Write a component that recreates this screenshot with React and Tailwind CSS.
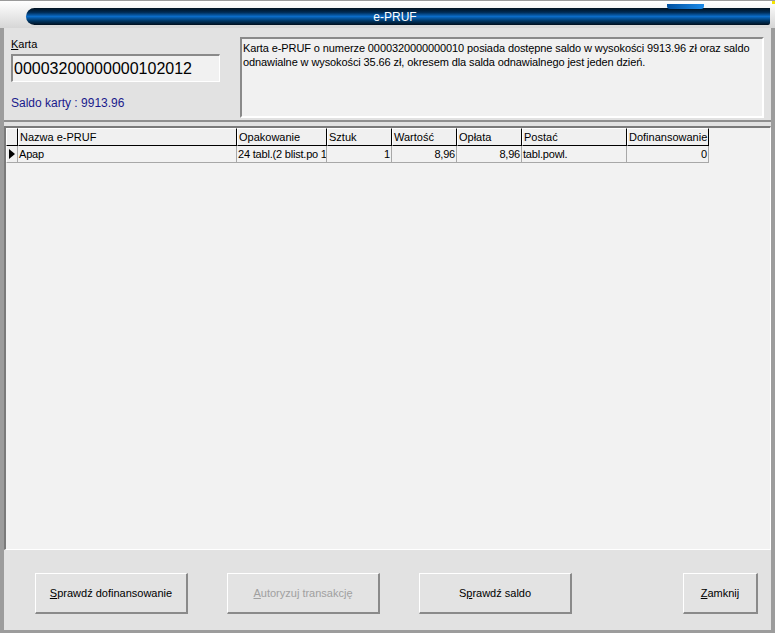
import React from "react";

const columns = [
    { label: "", width: "w-[12px]" },
    { label: "Nazwa e-PRUF", width: "w-[219px]" },
    { label: "Opakowanie", width: "w-[90px]" },
    { label: "Sztuk", width: "w-[65px]" },
    { label: "Wartość", width: "w-[65px]" },
    { label: "Opłata", width: "w-[65px]" },
    { label: "Postać", width: "w-[105px]" },
    { label: "Dofinansowanie", width: "w-[82px]" },
];

const row = [
    { value: "", align: "text-left" },
    { value: "Apap", align: "text-left" },
    { value: "24 tabl.(2 blist.po 1", align: "text-left" },
    { value: "1", align: "text-right" },
    { value: "8,96", align: "text-right" },
    { value: "8,96", align: "text-right" },
    { value: "tabl.powl.", align: "text-left" },
    { value: "0", align: "text-right" },
];

const WinButton = ({ children, className = "", disabled = false }) => (
    <button
        className={`h-[41px] bg-[#e3e3e3] border-t border-l border-t-white border-l-white border-r-2 border-b-2 border-r-[#8a8a8a] border-b-[#8a8a8a] text-[11px] ${
            disabled ? "text-[#a0a0a0]" : "text-black"
        } ${className}`}
    >
        {children}
    </button>
);

const App = () => {
    return (
        <div
            className="w-[775px] h-[633px] bg-[#d4d4d4] flex flex-col overflow-hidden"
            style={{ fontFamily: '"Liberation Sans", Arial, sans-serif' }}
        >
            {/* title bar */}
            <div className="relative h-[28px] bg-[linear-gradient(to_bottom,#ffffff,#f3f3f3_30%,#d6d6d6)] border-t border-[#9a9a9a] pl-[26px] pt-[7px] pr-[5px]">
                <div className="h-[17px] rounded-l-[9px] rounded-br-[2px] bg-[linear-gradient(to_bottom,#00101e,#002a52_25%,#0b6cc8_50%,#003766_75%,#000f1d)] flex items-center justify-center">
                    <span className="text-white text-[12px] -ml-[6px]">e-PRUF</span>
                </div>
                <div className="absolute left-[667px] top-[3px] w-[37px] h-[5px] bg-[linear-gradient(to_right,#0050a0,#1b8ae8)] rounded-b-[3px]"></div>
                <div className="absolute right-0 top-0 w-[3px] h-[3px] bg-[#f5e400]"></div>
            </div>

            {/* body */}
            <div className="flex-1 flex flex-col border-l-[4px] border-r-[4px] border-b-[3px] border-[#9c9c9c] bg-[#e2e2e2]">
                {/* top panel */}
                <div className="h-[94px] flex px-[7px] pt-[8px] border-b-2 border-[#8f8f8f]">
                    <div className="w-[229px] flex flex-col">
                        <div className="text-[11px] text-black pt-[2px] leading-[13px]">
                            <span className="underline">K</span>arta
                        </div>
                        <div className="mt-[3px] w-[209px] h-[28px] bg-[#f1f1f1] border-t-2 border-l-2 border-[#8a8a8a] border-r border-b border-r-white border-b-white flex items-center pl-[1px] text-[16px] text-black leading-none">
                            00003200000000102012
                        </div>
                        <div className="mt-[12px] text-[12px] text-[#1a1a8c]">Saldo karty : 9913.96</div>
                    </div>
                    <div className="flex-1 h-[81px] mt-[1px] bg-[#f1f1f1] border-t-2 border-l-2 border-[#8a8a8a] border-r-2 border-b-2 border-r-white border-b-white px-[1px] pt-[2px] text-[11px] leading-[14px] text-black tracking-[-0.1px]">
                        Karta e-PRUF o numerze 0000320000000010 posiada dostępne saldo w wysokości 9913.96 zł oraz saldo odnawialne w wysokości 35.66 zł, okresem dla salda odnawialnego jest jeden dzień.
                    </div>
                </div>

                {/* grid */}
                <div className="mt-[4px] h-[424px] bg-[#f2f2f2] border-t-2 border-l-2 border-[#7a7a7a] border-r border-b border-r-white border-b-white">
                    <div className="flex h-[18px]">
                        {columns.map((c, i) => (
                            <div
                                key={i}
                                className={`${c.width} h-full bg-[#f0f0f0] border-t border-l border-white border-r border-b border-r-black border-b-black text-[11px] text-black leading-[16px] pl-[1px] whitespace-nowrap overflow-hidden`}
                            >
                                {c.label}
                            </div>
                        ))}
                    </div>
                    <div className="flex h-[17px]">
                        {row.map((c, i) => (
                            <div
                                key={i}
                                className={`${columns[i].width} h-full border-r border-b border-[#a8a8a8] text-[11px] tracking-[-0.2px] text-black leading-[16px] px-[1px] whitespace-nowrap overflow-hidden ${c.align} ${
                                    i === 0 ? "bg-[#f0f0f0] border-l border-l-white flex items-center justify-center" : ""
                                }`}
                            >
                                {i === 0 ? (
                                    <svg width="6" height="10" viewBox="0 0 6 10">
                                        <path d="M0 0 L6 5 L0 10 Z" fill="#000" />
                                    </svg>
                                ) : (
                                    c.value
                                )}
                            </div>
                        ))}
                    </div>
                </div>

                {/* buttons */}
                <div className="flex-1 flex items-start pt-[23px] pl-[31px] pr-[13px]">
                    <WinButton className="w-[153px]">
                        <span className="underline">S</span>prawdź dofinansowanie
                    </WinButton>
                    <WinButton className="w-[153px] ml-[39px]" disabled>
                        <span className="underline">A</span>utoryzuj transakcję
                    </WinButton>
                    <WinButton className="w-[153px] ml-[39px]">
                        S<span className="underline">p</span>rawdź saldo
                    </WinButton>
                    <WinButton className="w-[75px] ml-auto">
                        <span className="underline">Z</span>amknij
                    </WinButton>
                </div>
            </div>
        </div>
    );
};

export default App;
